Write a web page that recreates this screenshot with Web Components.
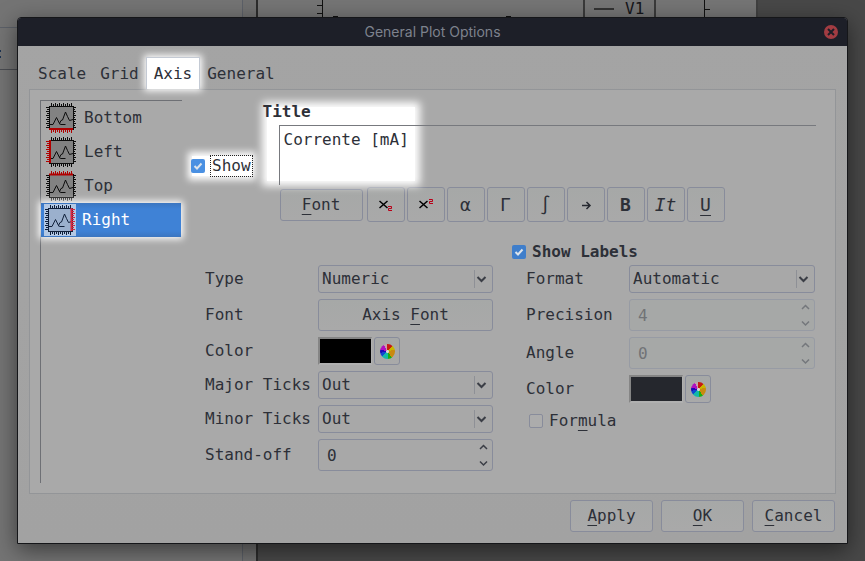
<!DOCTYPE html>
<html lang="en">
<head>
<meta charset="utf-8">
<title>General Plot Options</title>
<style>
  body {
    margin: 0;
    min-height: 100vh;
    background: #484848;
    color: #2d3038;
    font: 16px/20px "DejaVu Sans Mono", "Liberation Mono", monospace;
    --line: #888c9b;
    --face: #a8a8a8;
    --blue: #3f82d6;
    overflow: hidden;
  }
</style>
</head>
<body>
<plot-backdrop></plot-backdrop>
<plot-options></plot-options>

<script>
const define = (name, html, setup) => {
  const template = document.createElement('template');
  template.innerHTML = '<style>*{box-sizing:border-box}button,input,select,textarea{font:inherit;color:inherit}u{text-decoration-thickness:1px;text-underline-offset:4px;text-decoration-skip-ink:none}</style>' + html;
  customElements.define(name, class extends HTMLElement {
    constructor() {
      super();
      this.attachShadow({ mode: 'open' }).append(template.content.cloneNode(true));
    }
    connectedCallback() {
      if (setup && !this.ready) { this.ready = true; setup(this, this.shadowRoot); }
    }
  });
};

/* Windows behind the dialog */
define('plot-backdrop', `
<style>
  :host { position: absolute; inset: 0; z-index: -1; display: flex; overflow: hidden; }
  .side { width: 258px; background: #747474; border-right: 2px solid #2c2c2c; position: relative; }
  .side::after { content: ""; position: absolute; inset: 0 0 0 auto; width: 13px; background: #707070; border-left: 1px solid #5c6068; }
  .rows { height: 70px; border-bottom: 1px solid #4b4d52; }
  .rows div { height: 28px; border-bottom: 1px solid #5c6068; margin-bottom: 22px; }
  .rows svg { fill: #1c3352; }
  .plot { width: 500px; height: 60px; background: #757575; border-right: 2px solid #404040; display: flex; }
  svg { display: block; }
  .legend { width: 73px; height: 30px; border: solid #3a3a3a; border-width: 0 2px; color: #15161a; padding-left: 9px; display: flex; align-items: start; gap: 11px; line-height: 17px; }
  .legend i { width: 20px; height: 2px; margin-top: 8px; background: #333; }
  .spacer { width: 325px; }
</style>
<div class="side"><div class="rows"><div></div><svg width="2" height="8"><rect width="1" height="2"/><rect y="6" width="1" height="2"/></svg></div></div>
<div class="plot">
  <div class="spacer"><svg width="325" height="18" fill="none" stroke="#111"><path d="M64.500 0V18M59 5.500H64M59 13.500H64M75 16.500H80M248 16.500H253"/></svg></div>
  <div class="legend"><i></i>V1</div>
  <svg width="90" height="18" fill="none" stroke="#111"><path d="M48.500 0V18M49 9.500H54"/></svg>
</div>`);

define('push-button', `
<style>
  :host { display: block; }
  button { display: flex; align-items: center; justify-content: center; width: 100%; height: var(--h, 32px); padding: 0; margin: 0; border: 1px solid var(--line); border-radius: 3px; background: linear-gradient(#a6a8a7, #a9a9a9); white-space: pre; }
  :host([glyph]) button { --h: 35px; font-size: 18px; }
  :host([small]) button { --h: 28px; }
</style>
<button type="button"><slot></slot></button>`, (host, root) => {
  const name = host.getAttribute('name');
  if (name) root.querySelector('button').setAttribute('aria-label', name);
});

define('check-field', `
<style>
  :host { display: inline-block; position: relative; }
  label { display: flex; align-items: center; gap: 5px; position: relative; }
  input { appearance: none; margin: 0; width: 14px; height: 14px; flex: none; border: 1px solid var(--line); border-radius: 2px; background: #acacac; }
  input:checked { border: 0; background: #3f7ecb url("data:image/svg+xml,%3Csvg xmlns='http://www.w3.org/2000/svg' viewBox='0 0 14 14'%3E%3Cpath d='M3.500 7L6 9.500L10.500 4.500' fill='none' stroke='%23dde4ec' stroke-width='2'/%3E%3C/svg%3E"); }
  span { padding: 0 1px; }
  :host([bold]) { font-weight: bold; }
  :host([lit])::before { content: ""; position: absolute; inset: 1px 1px; background: #fff; box-shadow: 0 0 7px 4px #fff; }
  :host([lit]) input:checked { background-color: #4a90e2; }
  :host([lit]) span { border: 1px dotted #222; padding: 0 1px; }
</style>
<label><input type="checkbox"><span><slot></slot></span></label>`, (host, root) => {
  root.querySelector('input').checked = host.hasAttribute('checked');
});

define('form-row', `
<style>
  :host { display: grid; grid-template-columns: var(--label) minmax(0, 1fr); align-items: center; }
  .box { position: relative; display: grid; }
  select, input { appearance: none; width: 100%; height: 28px; margin: 0; padding: 0 3px; border: 1px solid var(--line); border-radius: 3px; background: var(--face); outline: 0; opacity: 1; }
  input { height: 32px; padding: 0 8px; -moz-appearance: textfield; }
  input::-webkit-inner-spin-button { appearance: none; display: none; }
  input:disabled { color: #717376; border-color: #979ba4; background: #a6a8a7; }
  .arrow { position: absolute; pointer-events: none; top: 0; right: 0; height: 100%; width: 21px; }
  svg { fill: none; stroke: #3b3e46; stroke-width: 2; }
  input:disabled + svg { stroke: #74777c; }
  .rule { stroke: #8e9096; stroke-width: 1; }
</style>
<label for="c"></label><div class="box"></div>`, (host, root) => {
  const value = host.getAttribute('value');
  root.querySelector('label').textContent = host.getAttribute('label');
  root.querySelector('.box').innerHTML = host.hasAttribute('spin')
    ? `<input id="c" type="number" value="${value}" ${host.hasAttribute('disabled') ? 'disabled' : ''}>
       <svg class="arrow" viewBox="0 0 21 32"><path stroke-width="1.500" d="M8 10L11.500 6.500L15 10M8 22.500L11.500 26L15 22.500"/></svg>`
    : `<select id="c"><option>${value}</option></select>
       <svg class="arrow" viewBox="0 0 21 28"><path class="rule" d="M2.500 5V23"/><path d="M5.500 12L9.500 16L13.500 12"/></svg>`;
});

define('button-row', `
<style>
  :host { display: grid; grid-template-columns: var(--label) minmax(0, 1fr); align-items: center; }
</style>
<span><slot name="label"></slot></span><slot></slot>`);

define('color-row', `
<style>
  :host { display: grid; grid-template-columns: var(--label) 54px auto; align-items: center; }
  .swatch { height: 28px; border: solid #858585; border-width: 2px 1px 2px 2px; border-right-color: #b0b0b0; border-bottom-color: #b0b0b0; }
  push-button { margin-left: 2px; width: 26px; }
  i { width: 15px; height: 15px; border-radius: 50%; background: radial-gradient(#d8d8d8 1px, transparent 2px), conic-gradient(#c61c12 0 40deg, #c8b400 40deg 75deg, #c98a10 75deg 145deg, #18b010 145deg 180deg, #12b8a8 180deg 225deg, #1048d0 225deg 260deg, #1c08b8 260deg 285deg, #b010c0 285deg 330deg, #c8a0a8 330deg 360deg); }
</style>
<span class="text"></span><div class="swatch"></div><push-button small name="Choose color"><i></i></push-button>`, (host, root) => {
  root.querySelector('.text').textContent = 'Color';
  root.querySelector('.swatch').style.background = host.getAttribute('value');
});

define('axis-item', `
<style>
  :host { display: block; position: relative; }
  button { position: relative; display: flex; align-items: center; gap: 7px; width: 100%; height: 34px; border: 0; padding: 0 4px; background: none; text-align: left; }
  svg { width: 32px; height: 32px; flex: none; fill: none; stroke: #0c0c0c; }
  :host([selected]) { box-shadow: 0 0 7px 2px #fff; }
  :host([selected]) button { background: linear-gradient(#3c76c0, #3f82d6 6px, #3f82d6 28px, #3c76c0); color: #fff; padding-left: 3px; gap: 6px; }
  :host([selected]) svg { background: #b3c8e4; stroke: #10203a; --plate: #9bb0cd; --mark: #d6273f; }
</style>
<button type="button"><svg viewBox="0 0 32 32"></svg><span><slot></slot></span></button>`, (host, root) => {
  const side = host.getAttribute('side');
  const mark = 'var(--mark, #b00000)';
  let ticks = { top: '', bottom: '', left: '', right: '' };
  for (let i = 0; i < 11; i++) {
    const p = 6.5 + i * 2, n = i % 2 ? 2 : 3;
    ticks.top += `M${p} ${4 - n}V4`;
    ticks.bottom += `M${p} 27V${28 + n}`;
    ticks.left += `M${4 - n} ${p - 1}H4`;
    ticks.right += `M28 ${p - 1}H${28 + n}`;
  }
  const bars = { top: 'M4 4.5H28', bottom: 'M4 27H28', left: 'M5 4V27', right: 'M27.5 4V27' };
  root.querySelector('svg').innerHTML =
    '<rect x="4.500" y="4.500" width="24" height="23" style="fill:var(--plate,#828282)"/>' +
    Object.keys(ticks).map(k => `<path d="${ticks[k]}" ${k === side ? `style="stroke:${mark}"` : ''}/>`).join('') +
    '<path d="M5 22.500H8L11.500 15.500L14.500 21.500L16 18.500L17.500 18L20.500 10L22.500 14.500L24.500 18.500L28 17.500M14 21.500L16 22.500H20.500"/>' +
    `<path d="${bars[side]}" stroke-width="2" style="stroke:${mark}"/>`;
});

define('tab-strip', `
<style>
  :host { display: flex; padding-left: 2px; height: 32px; position: relative; z-index: 1; }
  button { border: 0; background: none; padding: 2px 7px 0; margin: 0; }
  button[aria-selected=true] { border: 1px solid #c4cad4; border-bottom: 0; background: #fff; box-shadow: 0 0 7px 2px #fff; padding-top: 0; }
</style>
<button role="tab">Scale</button><button role="tab">Grid</button><button role="tab" aria-selected="true">Axis</button><button role="tab">General</button>`, host => host.setAttribute('role', 'tablist'));

define('title-editor', `
<style>
  :host { display: block; position: relative; padding-left: 17px; }
  :host::before { content: ""; position: absolute; left: 5px; top: 5px; width: 148px; height: 74px; background: #fff; box-shadow: 0 0 8px 5px #fff; }
  label { position: relative; display: block; margin-left: -16px; font-weight: bold; line-height: 20px; padding-bottom: 3px; }
  textarea { position: relative; display: block; width: 100%; height: 60px; resize: none; border: solid #77797e; border-width: 1px 0 0 1px; background: none; outline: 0; padding: 4px; margin: 0; line-height: 20px; }
  .tools { display: flex; align-items: center; gap: 2px; padding: 2px 0 0 1px; }
  .tools > * { flex: 0 1 38px; }
  .tools .font { flex-basis: 83px; margin-right: 2px; }
  svg { width: 20px; height: 16px; fill: none; stroke: #000; stroke-width: 1.500; }
  .two { stroke: #b80018; stroke-width: 1; }
</style>
<label for="t">Title</label>
<textarea id="t" spellcheck="false">Corrente [mA]</textarea>
<div class="tools">
  <push-button class="font"><u>F</u>ont</push-button>
  <push-button glyph name="Subscript"><svg viewBox="0 0 20 16"><path d="M3.500 4L11.500 11M11.500 4L3.500 11"/><path class="two" d="M12 9.500H15.500V11.500H12.500V13.500H16"/></svg></push-button>
  <push-button glyph name="Superscript"><svg viewBox="0 0 20 16"><path d="M3.500 4L11.500 11M11.500 4L3.500 11"/><path class="two" d="M13 2.500H16.500V4.500H13.500V6.500H17"/></svg></push-button>
  <push-button glyph>α</push-button>
  <push-button glyph>Γ</push-button>
  <push-button glyph>∫</push-button>
  <push-button glyph name="Arrow"><svg viewBox="0 0 20 16"><path stroke="#262930" d="M6 8.500H14M10.500 5L14 8.500L10.500 12"/></svg></push-button>
  <push-button glyph><b>B</b></push-button>
  <push-button glyph><i>It</i></push-button>
  <push-button glyph><u>U</u></push-button>
</div>`);

define('axis-page', `
<style>
  :host { display: flex; border: 1px solid #939598; background: #a9a9a9; padding: 10px 19px 10px 10px; }
  nav { flex: none; width: 142px; border: solid #6e7075; border-width: 1px 0 0 1px; padding-right: 1px; min-height: 383px; }
  main { flex: 1; min-width: 0; padding: 2px 0 0 8px; }
  .top { display: flex; gap: 9px; }
  .top check-field { flex: none; margin: 53px 0 0 1px; align-self: start; }
  title-editor { flex: 1; min-width: 0; }
  .forms { display: flex; gap: 19px; padding: 20px 1px 0 15px; }
  .col { display: grid; gap: 6px; align-content: start; min-width: 0; }
  .left { flex: 1 1 288px; --label: 113px; padding-top: 23px; }
  .right { flex: 1 1 303px; gap: 3px; }
  .indent { display: grid; gap: 6px; padding-left: 14px; --label: 103px; }
  .formula { padding: 2px 0 0 3px; }
</style>
<nav aria-label="Axes">
  <axis-item side="bottom">Bottom</axis-item>
  <axis-item side="left">Left</axis-item>
  <axis-item side="top">Top</axis-item>
  <axis-item side="right" selected>Right</axis-item>
</nav>
<main>
  <div class="top"><check-field checked lit>Show</check-field><title-editor></title-editor></div>
  <div class="forms">
    <div class="col left">
      <form-row label="Type" value="Numeric"></form-row>
      <button-row><span slot="label">Font</span><push-button>Axis <u>F</u>ont</push-button></button-row>
      <color-row value="#000"></color-row>
      <form-row label="Major Ticks" value="Out"></form-row>
      <form-row label="Minor Ticks" value="Out"></form-row>
      <form-row label="Stand-off" value="0" spin></form-row>
    </div>
    <div class="col right">
      <check-field checked bold>Show Labels</check-field>
      <div class="indent">
        <form-row label="Format" value="Automatic"></form-row>
        <form-row label="Precision" value="4" spin disabled></form-row>
        <form-row label="Angle" value="0" spin disabled></form-row>
        <color-row value="#25272d"></color-row>
        <check-field class="formula">For<u>m</u>ula</check-field>
      </div>
    </div>
  </div>
</main>`);

define('plot-options', `
<style>
  :host { display: block; margin: 17px 17px 0; border: 1px solid #151619; border-radius: 4px 4px 0 0; background: linear-gradient(#a4a4a4, #a2a2a2); box-shadow: 0 6px 22px rgba(0,0,0,.5); }
  header { display: flex; align-items: center; height: 28px; background: #1d1f28; border-radius: 3px 3px 0 0; padding: 0 9px 0 23px; color: #7d828d; font: 14px/20px Inter, "Open Sans", sans-serif; }
  h1 { flex: 1; margin: 0; text-align: center; font: inherit; }
  header button { width: 14px; height: 14px; padding: 0; border: 0; border-radius: 50%; background: #a23c42; display: grid; place-items: center; }
  header svg { width: 8px; height: 8px; stroke: #1d1f28; stroke-width: 2; }
  .body { padding: 11px 11px 11px; }
  footer { display: flex; justify-content: flex-end; gap: 8px; padding: 6px 1px 0 0; }
  footer push-button { width: 83px; }
</style>
<header><h1>General Plot Options</h1><button type="button" aria-label="Close"><svg viewBox="0 0 8 8"><path d="M1 1L7 7M7 1L1 7"/></svg></button></header>
<div class="body">
  <tab-strip></tab-strip>
  <axis-page></axis-page>
  <footer><push-button><u>A</u>pply</push-button><push-button><u>O</u>K</push-button><push-button><u>C</u>ancel</push-button></footer>
</div>`);
</script>
</body>
</html>
